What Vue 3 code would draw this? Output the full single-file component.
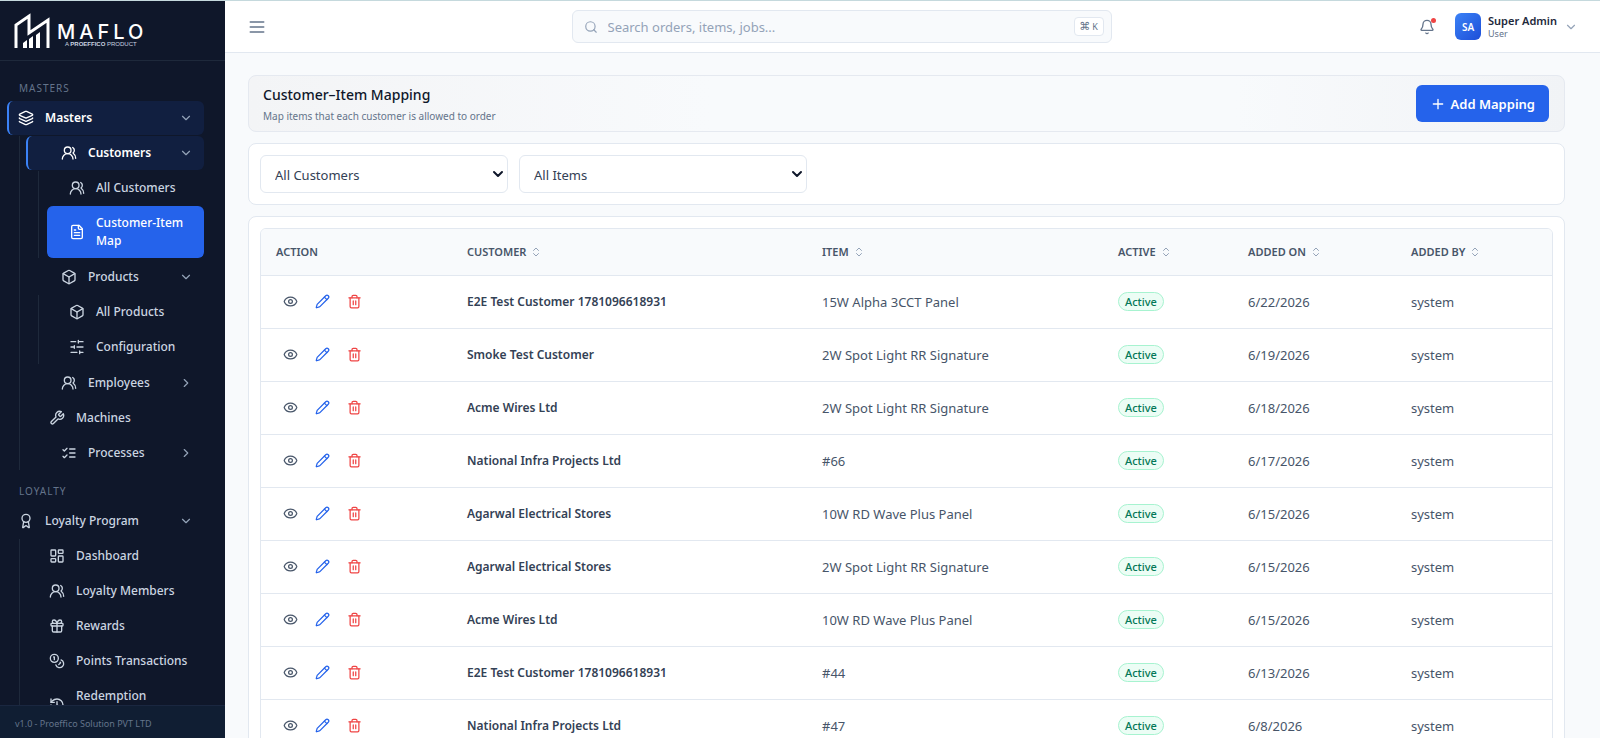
<script setup>
import { ref, h } from 'vue'

const icons = {
  layers: '<path d="M12.83 2.18a2 2 0 0 0-1.66 0L2.6 6.08a1 1 0 0 0 0 1.83l8.58 3.91a2 2 0 0 0 1.66 0l8.58-3.9a1 1 0 0 0 0-1.83z"/><path d="M2 12a1 1 0 0 0 .58.91l8.6 3.91a2 2 0 0 0 1.65 0l8.58-3.9A1 1 0 0 0 22 12"/><path d="M2 17a1 1 0 0 0 .58.91l8.6 3.91a2 2 0 0 0 1.65 0l8.58-3.9A1 1 0 0 0 22 17"/>',
  users: '<path d="M18 21a8 8 0 0 0-16 0"/><circle cx="10" cy="8" r="5"/><path d="M22 20c0-3.37-2-6.5-4-8a5 5 0 0 0-.45-8.3"/>',
  file: '<path d="M15 2H6a2 2 0 0 0-2 2v16a2 2 0 0 0 2 2h12a2 2 0 0 0 2-2V7Z"/><path d="M14 2v4a2 2 0 0 0 2 2h4"/><path d="M10 9H8"/><path d="M16 13H8"/><path d="M16 17H8"/>',
  box: '<path d="M21 8a2 2 0 0 0-1-1.73l-7-4a2 2 0 0 0-2 0l-7 4A2 2 0 0 0 3 8v8a2 2 0 0 0 1 1.73l7 4a2 2 0 0 0 2 0l7-4A2 2 0 0 0 21 16Z"/><path d="m3.3 7 8.7 5 8.7-5"/><path d="M12 22V12"/>',
  sliders: '<path d="M21 4h-7M10 4H3M21 12h-9M8 12H3M21 20h-5M12 20H3M14 2v4M8 10v4M16 18v4"/>',
  wrench: '<path d="M14.7 6.3a1 1 0 0 0 0 1.4l1.6 1.6a1 1 0 0 0 1.4 0l3.77-3.77a6 6 0 0 1-7.94 7.94l-6.91 6.91a2.12 2.12 0 0 1-3-3l6.91-6.91a6 6 0 0 1 7.94-7.94l-3.76 3.76z"/>',
  checks: '<path d="m3 17 2 2 4-4"/><path d="m3 7 2 2 4-4"/><path d="M13 6h8M13 12h8M13 18h8"/>',
  award: '<path d="m15.48 12.89 1.51 8.53a.5.5 0 0 1-.81.47l-3.58-2.69a1 1 0 0 0-1.2 0l-3.59 2.69a.5.5 0 0 1-.81-.47l1.52-8.53"/><circle cx="12" cy="8" r="6"/>',
  dashboard: '<rect width="7" height="9" x="3" y="3" rx="1"/><rect width="7" height="5" x="14" y="3" rx="1"/><rect width="7" height="9" x="14" y="12" rx="1"/><rect width="7" height="5" x="3" y="16" rx="1"/>',
  gift: '<rect x="3" y="8" width="18" height="4" rx="1"/><path d="M12 8v13"/><path d="M19 12v7a2 2 0 0 1-2 2H7a2 2 0 0 1-2-2v-7"/><path d="M7.5 8a2.5 2.5 0 0 1 0-5A4.8 8 0 0 1 12 8a4.8 8 0 0 1 4.5-5 2.5 2.5 0 0 1 0 5"/>',
  coins: '<circle cx="8" cy="8" r="6"/><path d="M18.09 10.37A6 6 0 1 1 10.34 18"/><path d="M7 6h1v4"/><path d="m16.71 13.88.7.71-2.82 2.82"/>',
  history: '<path d="M3 12a9 9 0 1 0 9-9 9.75 9.75 0 0 0-6.74 2.74L3 8"/><path d="M3 3v5h5"/><path d="M12 7v5l4 2"/>',
  down: '<path d="m6 9 6 6 6-6"/>',
  right: '<path d="m9 18 6-6-6-6"/>',
  menu: '<path d="M4 6h16M4 12h16M4 18h16"/>',
  search: '<circle cx="11" cy="11" r="8"/><path d="m21 21-4.3-4.3"/>',
  bell: '<path d="M10.27 21a2 2 0 0 0 3.46 0"/><path d="M3.26 15.33A1 1 0 0 0 4 17h16a1 1 0 0 0 .74-1.67C19.41 13.96 18 12.5 18 8A6 6 0 0 0 6 8c0 4.5-1.41 5.96-2.74 7.33"/>',
  plus: '<path d="M5 12h14M12 5v14"/>',
  sort: '<path d="m7 15 5 5 5-5"/><path d="m7 9 5-5 5 5"/>',
  eye: '<path d="M2.06 12.35a1 1 0 0 1 0-.7 10.75 10.75 0 0 1 19.88 0 1 1 0 0 1 0 .7 10.75 10.75 0 0 1-19.88 0"/><circle cx="12" cy="12" r="3"/>',
  pencil: '<path d="M21.17 6.81a1 1 0 0 0-3.98-3.98L3.84 16.17a2 2 0 0 0-.5.83l-1.32 4.35a.5.5 0 0 0 .62.62l4.35-1.32a2 2 0 0 0 .83-.5z"/><path d="m15 5 4 4"/>',
  trash: '<path d="M3 6h18"/><path d="M19 6v14a2 2 0 0 1-2 2H7a2 2 0 0 1-2-2V6"/><path d="M8 6V4a2 2 0 0 1 2-2h4a2 2 0 0 1 2 2v2"/><path d="M10 11v6M14 11v6"/>',
}

const Icon = (props) =>
  h('svg', {
    viewBox: '0 0 24 24',
    width: props.size || 16,
    height: props.size || 16,
    fill: 'none',
    stroke: 'currentColor',
    'stroke-width': props.weight || 2,
    'stroke-linecap': 'round',
    'stroke-linejoin': 'round',
    'aria-hidden': 'true',
    innerHTML: icons[props.name],
  })
Icon.props = ['name', 'size', 'weight']

const masters = [
  {
    label: 'Customers', icon: 'users', open: true, current: true,
    children: [
      { label: 'All Customers', icon: 'users' },
      { label: 'Customer-Item Map', icon: 'file', active: true },
    ],
  },
  {
    label: 'Products', icon: 'box', open: true,
    children: [
      { label: 'All Products', icon: 'box' },
      { label: 'Configuration', icon: 'sliders' },
    ],
  },
  { label: 'Employees', icon: 'users', children: [] },
  { label: 'Machines', icon: 'wrench' },
  { label: 'Processes', icon: 'checks', children: [] },
]

const loyalty = [
  { label: 'Dashboard', icon: 'dashboard' },
  { label: 'Loyalty Members', icon: 'users' },
  { label: 'Rewards', icon: 'gift' },
  { label: 'Points Transactions', icon: 'coins' },
  { label: 'Redemption', icon: 'history', tall: true },
]

const columns = ['Customer', 'Item', 'Active', 'Added On', 'Added By']

const rows = [
  ['E2E Test Customer 1781096618931', '15W Alpha 3CCT Panel', '6/22/2026'],
  ['Smoke Test Customer', '2W Spot Light RR Signature', '6/19/2026'],
  ['Acme Wires Ltd', '2W Spot Light RR Signature', '6/18/2026'],
  ['National Infra Projects Ltd', '#66', '6/17/2026'],
  ['Agarwal Electrical Stores', '10W RD Wave Plus Panel', '6/15/2026'],
  ['Agarwal Electrical Stores', '2W Spot Light RR Signature', '6/15/2026'],
  ['Acme Wires Ltd', '10W RD Wave Plus Panel', '6/15/2026'],
  ['E2E Test Customer 1781096618931', '#44', '6/13/2026'],
  ['National Infra Projects Ltd', '#47', '6/8/2026'],
]

const query = ref('')
const customer = ref('all')
const item = ref('all')
</script>

<template>
  <div class="app">
    <aside class="sidebar">
      <div class="brand">
        <svg class="mark" viewBox="0 0 36 36" width="36" height="36" aria-hidden="true">
          <path d="M2 35V12L15 3v17L34 7v28" fill="none" stroke="#fff" stroke-width="3" />
          <path d="M9 35v-5l4-3v8zM15 35V26l4-3v12zM22 35V22l4-3v16z" fill="#fff" />
        </svg>
        <div class="wordmark">
          <span class="name">MAFLO</span>
          <span class="tag">A <b>PROEFFICO</b> PRODUCT</span>
        </div>
      </div>

      <nav class="nav" aria-label="Main">
        <h2 class="section">MASTERS</h2>
        <button class="item top current" type="button" aria-expanded="true">
          <Icon name="layers" /><span class="label">Masters</span><Icon class="chev" name="down" :size="14" />
        </button>
        <div class="branch">
          <template v-for="m in masters" :key="m.label">
            <button v-if="m.children" class="item group" :class="{ current: m.current }" type="button" :aria-expanded="!!m.open">
              <Icon :name="m.icon" /><span class="label">{{ m.label }}</span>
              <Icon class="chev" :name="m.open ? 'down' : 'right'" :size="14" />
            </button>
            <a v-else class="item leaf" href="#"><Icon :name="m.icon" /><span class="label">{{ m.label }}</span></a>
            <div v-if="m.open" class="branch inner">
              <a v-for="c in m.children" :key="c.label" class="item leaf" :class="{ active: c.active }" href="#">
                <Icon :name="c.icon" /><span class="label">{{ c.label }}</span>
              </a>
            </div>
          </template>
        </div>

        <h2 class="section second">LOYALTY</h2>
        <button class="item top" type="button" aria-expanded="true">
          <Icon name="award" /><span class="label">Loyalty Program</span><Icon class="chev" name="down" :size="14" />
        </button>
        <div class="branch">
          <a v-for="l in loyalty" :key="l.label" class="item leaf" :class="{ tall: l.tall }" href="#">
            <Icon :name="l.icon" /><span class="label">{{ l.label }}</span>
          </a>
        </div>
      </nav>

      <footer class="version">v1.0 - Proeffico Solution PVT LTD</footer>
    </aside>

    <div class="main">
      <header class="topbar">
        <button class="plain menu" type="button" aria-label="Toggle menu"><Icon name="menu" :size="20" /></button>
        <label class="search">
          <Icon name="search" :size="14" />
          <input v-model="query" type="text" placeholder="Search orders, items, jobs..." aria-label="Search" />
          <kbd><span class="cmd">⌘</span>K</kbd>
        </label>
        <div class="account">
          <button class="plain bell" type="button" aria-label="Notifications">
            <Icon name="bell" /><span class="dot"></span>
          </button>
          <button class="plain user" type="button">
            <span class="avatar">SA</span>
            <span class="who"><strong>Super Admin</strong><small>User</small></span>
            <Icon class="caret" name="down" :size="14" />
          </button>
        </div>
      </header>

      <main class="content">
        <section class="heading">
          <div>
            <h1>Customer–Item Mapping</h1>
            <p>Map items that each customer is allowed to order</p>
          </div>
          <button class="add" type="button"><Icon name="plus" />Add Mapping</button>
        </section>

        <section class="card filters">
          <div class="pick customer">
            <select v-model="customer" aria-label="Customer">
              <option value="all">All Customers</option>
            </select>
            <Icon name="down" :weight="3" />
          </div>
          <div class="pick product">
            <select v-model="item" aria-label="Item">
              <option value="all">All Items</option>
            </select>
            <Icon name="down" :weight="3" />
          </div>
        </section>

        <section class="card listing">
          <div class="frame">
            <table>
              <colgroup>
                <col class="c1" /><col /><col class="c3" /><col class="c4" /><col class="c5" /><col class="c6" />
              </colgroup>
              <thead>
                <tr>
                  <th scope="col">ACTION</th>
                  <th v-for="c in columns" :key="c" scope="col">
                    <button class="plain sort" type="button">{{ c.toUpperCase() }}<Icon name="sort" :size="12" /></button>
                  </th>
                </tr>
              </thead>
              <tbody>
                <tr v-for="(r, i) in rows" :key="i">
                  <td>
                    <div class="actions">
                      <button class="plain view" type="button" aria-label="View"><Icon name="eye" :size="15" /></button>
                      <button class="plain edit" type="button" aria-label="Edit"><Icon name="pencil" :size="15" /></button>
                      <button class="plain remove" type="button" aria-label="Delete"><Icon name="trash" :size="15" /></button>
                    </div>
                  </td>
                  <td class="strong">{{ r[0] }}</td>
                  <td>{{ r[1] }}</td>
                  <td><span class="badge">Active</span></td>
                  <td>{{ r[2] }}</td>
                  <td>system</td>
                </tr>
              </tbody>
            </table>
          </div>
        </section>
      </main>
    </div>
  </div>
</template>

<style>
body {
  background: #f8fafc;
}
</style>

<style scoped>
.app {
  display: flex;
  height: 100vh;
  box-sizing: border-box;
  overflow: hidden;
  border-top: 1px solid #c5d9dd;
  background: #f8fafc;
  color: #475569;
  font-family: 'Noto Sans', 'Open Sans', sans-serif;
  font-size: 13px;
}
.app *,
.app *::before {
  box-sizing: border-box;
}
svg {
  flex: none;
  display: block;
}
button,
input,
select {
  font: inherit;
}
.plain {
  padding: 0;
  border: 0;
  background: none;
  color: inherit;
}

.sidebar {
  flex: none;
  display: flex;
  flex-direction: column;
  width: 225px;
  background: #0f172a;
  color: #cbd5e1;
}
.brand {
  flex: none;
  display: flex;
  align-items: center;
  gap: 7px;
  height: 60px;
  padding-left: 14px;
  border-bottom: 1px solid #1e293b;
}
.wordmark {
  display: flex;
  flex-direction: column;
  padding-top: 10px;
  color: #fff;
}
.name {
  font-family: Inter, sans-serif;
  font-size: 20px;
  line-height: 17px;
  font-weight: 500;
  letter-spacing: 4px;
}
.tag {
  padding-left: 8px;
  font-family: 'Liberation Sans', sans-serif;
  font-size: 6px;
  line-height: 7px;
  white-space: nowrap;
  color: #cbd5e1;
}
.nav {
  flex: 1;
  min-height: 0;
  overflow: hidden;
  padding: 20px 21px 0 7px;
}
.section {
  margin: 0 0 6px 12px;
  font-size: 10px;
  line-height: 14px;
  font-weight: 400;
  letter-spacing: 1px;
  color: #64748b;
}
.section.second {
  margin-top: 14px;
}
.item {
  display: flex;
  align-items: center;
  gap: 11px;
  width: 100%;
  margin-bottom: 1px;
  padding: 8px 11px;
  border: 0;
  border-left: 2px solid transparent;
  border-radius: 6px;
  background: none;
  color: #cbd5e1;
  font-size: 12px;
  line-height: 18px;
  font-weight: 500;
  text-align: left;
  text-decoration: none;
}
.item.top {
  padding-left: 9px;
}
.item.group {
  padding-left: 33px;
}
.item.leaf {
  padding-left: 21px;
}
.inner .item.leaf {
  padding-left: 20px;
}
.item.current {
  border-left-color: #3b82f6;
  background: #111f40;
  color: #fff;
  font-weight: 600;
}
.item.active {
  border-left-color: #2563eb;
  background: #2563eb;
  color: #fff;
}
.item.tall {
  min-height: 52px;
}
.item.tall .label {
  align-self: flex-start;
}
.label {
  flex: 1;
}
.chev {
  color: #94a3b8;
}
.branch {
  margin-left: 12px;
  padding-left: 6px;
  border-left: 1px solid #1e293b;
}
.branch.inner {
  margin-bottom: 2px;
  padding-left: 8px;
}
.version {
  flex: none;
  height: 33px;
  padding: 11px 15px;
  border-top: 1px solid #1a2740;
  background: #101e33;
  color: #64748b;
  font-size: 9px;
  line-height: 14px;
}

.main {
  flex: 1;
  min-width: 0;
  display: flex;
  flex-direction: column;
}
.topbar {
  flex: none;
  display: flex;
  justify-content: space-between;
  align-items: center;
  height: 52px;
  padding: 0 22px;
  border-bottom: 1px solid #e2e8f0;
  background: #fff;
}
.menu {
  color: #64748b;
}
.search {
  flex: 0 1 540px;
  display: flex;
  align-items: center;
  gap: 10px;
  height: 33px;
  padding: 0 7px 0 11px;
  border: 1px solid #e2e8f0;
  border-radius: 6px;
  background: #f8fafc;
  color: #94a3b8;
}
.search input {
  flex: 1;
  min-width: 0;
  padding: 0;
  border: 0;
  outline: 0;
  background: none;
  color: #334155;
}
.search input::placeholder {
  color: #94a3b8;
}
kbd {
  display: flex;
  align-items: center;
  justify-content: center;
  gap: 2px;
  width: 30px;
  height: 19px;
  border: 1px solid #e2e8f0;
  border-radius: 4px;
  background: #fff;
  color: #64748b;
  font-family: 'Noto Sans', sans-serif;
  font-size: 9px;
}
.cmd {
  font-family: 'DejaVu Sans', sans-serif;
  font-size: 11px;
}
.account {
  display: flex;
  align-items: center;
  gap: 20px;
  padding-left: 3px;
}
.bell {
  position: relative;
  color: #64748b;
}
.dot {
  position: absolute;
  top: -1px;
  right: -1px;
  width: 5px;
  height: 5px;
  border-radius: 50%;
  background: #ef4444;
}
.user {
  display: flex;
  align-items: center;
  gap: 7px;
  text-align: left;
}
.avatar {
  display: grid;
  place-items: center;
  width: 26px;
  height: 27px;
  border-radius: 6px;
  background: linear-gradient(135deg, #3b82f6, #1d4ed8);
  color: #fff;
  font-size: 10px;
  font-weight: 600;
}
.who {
  display: flex;
  flex-direction: column;
}
.who strong {
  color: #1e293b;
  font-size: 11px;
  line-height: 14px;
  font-weight: 600;
}
.who small {
  color: #64748b;
  font-size: 9px;
  line-height: 11px;
}
.caret {
  color: #94a3b8;
}

.content {
  flex: 1;
  min-height: 0;
  overflow: hidden;
  display: flex;
  flex-direction: column;
  gap: 11px;
  padding: 22px 35px 0 23px;
}
.heading {
  flex: none;
  display: flex;
  align-items: center;
  justify-content: space-between;
  height: 57px;
  padding: 0 15px 0 14px;
  border: 1px solid #e5e9f0;
  border-radius: 8px;
  background: linear-gradient(90deg, #f3f4f6, #f8fafc 35%, #f8fafc 75%, #f1f3f6);
}
h1 {
  margin: 0;
  color: #0f172a;
  font-size: 14px;
  line-height: 22px;
  font-weight: 500;
}
.heading p {
  margin: 2px 0 0;
  color: #64748b;
  font-size: 10px;
  line-height: 16px;
}
.add {
  display: flex;
  align-items: center;
  gap: 5px;
  height: 37px;
  padding: 0 14px;
  border: 0;
  border-radius: 6px;
  background: #2563eb;
  color: #fff;
  font-size: 13px;
  font-weight: 600;
}
.card {
  flex: none;
  border: 1px solid #e2e8f0;
  border-radius: 8px;
  background: #fff;
}
.filters {
  display: flex;
  gap: 11px;
  padding: 11px;
}
.pick {
  display: grid;
  align-items: center;
  color: #0f172a;
}
.pick select,
.pick svg {
  grid-area: 1 / 1;
}
.pick select {
  appearance: none;
  width: 100%;
  height: 38px;
  padding: 1px 28px 0 14px;
  border: 1px solid #e2e8f0;
  border-radius: 6px;
  background: #fff;
  color: #334155;
}
.pick svg {
  justify-self: end;
  margin-right: 2px;
  pointer-events: none;
}
.pick.customer {
  width: 248px;
}
.pick.product {
  width: 288px;
}
.listing {
  padding: 11px;
}
.frame {
  overflow: hidden;
  border: 1px solid #e2e8f0;
  border-radius: 6px;
}
table {
  width: 100%;
  table-layout: fixed;
  border-collapse: collapse;
}
.c1 { width: 191px; }
.c3 { width: 296px; }
.c4 { width: 130px; }
.c5 { width: 163px; }
.c6 { width: 156px; }
th,
td {
  padding: 0 14px 0 15px;
  text-align: left;
  white-space: nowrap;
}
th {
  height: 46px;
  background: #f8fafc;
  color: #475569;
  font-size: 11px;
  font-weight: 600;
}
td {
  height: 53px;
  border-top: 1px solid #e2e8f0;
  color: #475569;
}
td.strong {
  color: #334155;
  font-size: 12px;
  font-weight: 600;
}
.sort {
  display: flex;
  align-items: center;
  gap: 4px;
}
.sort svg {
  color: #94a3b8;
}
.actions {
  display: flex;
  gap: 4px;
}
.actions button {
  display: grid;
  place-items: center;
  width: 28px;
  height: 28px;
}
.view { color: #475569; }
.edit { color: #2563eb; }
.remove { color: #ef4444; }
.badge {
  display: inline-block;
  padding: 0 6px;
  border: 1px solid #a7f3d0;
  border-radius: 10px;
  background: #ecfdf5;
  color: #047857;
  font-size: 11px;
  line-height: 17px;
  font-weight: 500;
}
</style>
